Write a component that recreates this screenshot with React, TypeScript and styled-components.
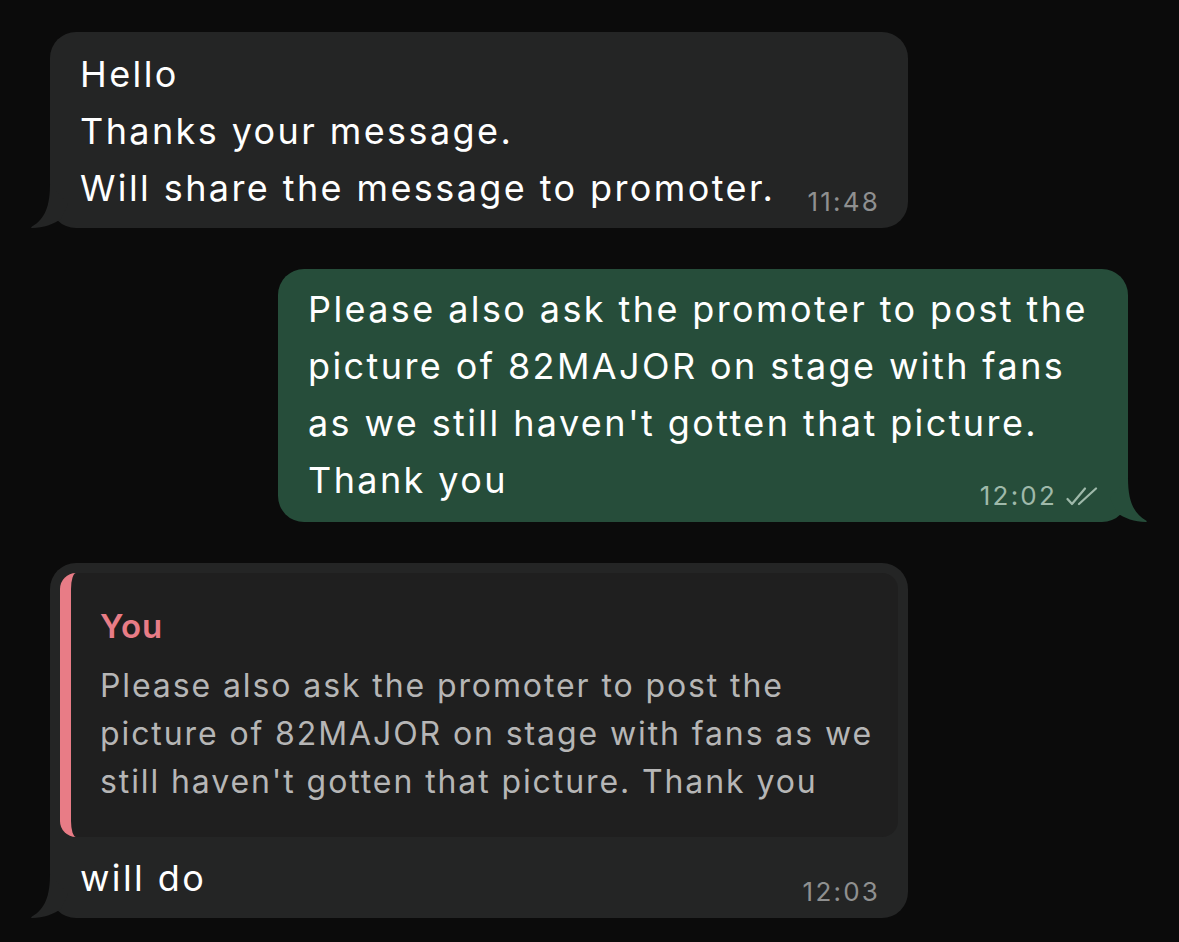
import styled, { createGlobalStyle } from 'styled-components';

const GlobalStyle = createGlobalStyle`
  html, body {
    margin: 0;
    padding: 0;
    background: #0b0b0b;
  }
  body {
    font-family: Inter, "Noto Sans", sans-serif;
    -webkit-font-smoothing: antialiased;
  }
`;

const Chat = styled.div`
  min-height: 100vh;
  box-sizing: border-box;
  padding: 32px 51px 20px 50px;
  display: flex;
  flex-direction: column;
  gap: 41px;
`;

const Bubble = styled.div<{ $out?: boolean; $width: number; $pad: string }>`
  position: relative;
  box-sizing: border-box;
  width: ${(p) => p.$width}px;
  align-self: ${(p) => (p.$out ? 'flex-end' : 'flex-start')};
  background: ${(p) => (p.$out ? '#264d3a' : '#242525')};
  border-radius: 26px;
  padding: ${(p) => p.$pad};
  display: flex;
  flex-direction: column;
`;

const Tail = styled.svg<{ $out?: boolean }>`
  position: absolute;
  bottom: 0;
  width: 48px;
  height: 44px;
  ${(p) => (p.$out ? 'right: -20px;' : 'left: -20px;')}
`;

const Row = styled.div<{ $pad?: string }>`
  display: flex;
  align-items: flex-end;
  justify-content: space-between;
  gap: 24px;
  padding: ${(p) => p.$pad || '0'};
`;

const Text = styled.div`
  color: #ffffff;
  font-size: 36px;
  line-height: 57px;
  white-space: nowrap;
  letter-spacing: 2.4px;
`;

const Meta = styled.div<{ $out?: boolean }>`
  display: flex;
  align-items: center;
  gap: 8px;
  color: ${(p) => (p.$out ? '#9fb9aa' : '#8f9090')};
  font-size: 26px;
  line-height: 26px;
  letter-spacing: 2.2px;
  margin-bottom: 2px;
  white-space: nowrap;
`;

const Quote = styled.div`
  background: #1f1f1f;
  border-left: 11px solid #e87c86;
  border-radius: 16px;
  padding: 33px 20px 31px 29px;
  display: flex;
  flex-direction: column;
  gap: 16px;
`;

const QuoteAuthor = styled.div`
  color: #e87c86;
  font-size: 33px;
  font-weight: 600;
  line-height: 40px;
  letter-spacing: 0.8px;
`;

const QuoteText = styled.div`
  color: #b6b6b6;
  font-size: 32px;
  line-height: 48px;
  letter-spacing: 1.9px;
  white-space: nowrap;
`;

const BubbleTail = ({ out, color }: { out?: boolean; color: string }) => (
  <Tail $out={out} viewBox="0 0 48 44">
    {out ? (
      <path d="M28 0 C28 22 33 35 46 42.5 Q48 44 45.5 44 C35 44 24 40 17 35 L10 20 Z" fill={color} />
    ) : (
      <path d="M20 0 C20 22 15 35 2 42.5 Q0 44 2.5 44 C13 44 24 40 31 35 L38 20 Z" fill={color} />
    )}
  </Tail>
);

const DoubleCheck = () => (
  <svg width="35" height="19" viewBox="0 0 35 19" fill="none" stroke="currentColor" strokeWidth="2.2" strokeLinecap="round" strokeLinejoin="round">
    <path d="M2.5 12 L7 17 L20 1.5" />
    <path d="M14 17 L31 1.5" />
  </svg>
);

export default function App() {
  return (
    <>
      <GlobalStyle />
      <Chat>
        <Bubble $width={858} $pad="14px 28px 11px 30px">
          <Row>
            <Text>
              Hello
              <br />
              Thanks your message.
              <br />
              Will share the message to promoter.
            </Text>
            <Meta>11:48</Meta>
          </Row>
          <BubbleTail color="#242525" />
        </Bubble>

        <Bubble $out $width={850} $pad="12px 28px 11px 30px">
          <Row>
            <Text>
              Please also ask the promoter to post the
              <br />
              picture of 82MAJOR on stage with fans
              <br />
              as we still haven't gotten that picture.
              <br />
              Thank you
            </Text>
          </Row>
          <Row>
            <span />
            <Meta $out style={{ marginTop: '-26px' }}>
              12:02 <DoubleCheck />
            </Meta>
          </Row>
          <BubbleTail out color="#264d3a" />
        </Bubble>

        <Bubble $width={858} $pad="10px 10px 11px 10px">
          <Quote>
            <QuoteAuthor>You</QuoteAuthor>
            <QuoteText>
              Please also ask the promoter to post the
              <br />
              picture of 82MAJOR on stage with fans as we
              <br />
              still haven't gotten that picture. Thank you
            </QuoteText>
          </Quote>
          <Row $pad="13px 18px 0 20px">
            <Text>will do</Text>
            <Meta>12:03</Meta>
          </Row>
          <BubbleTail color="#242525" />
        </Bubble>
      </Chat>
    </>
  );
}
